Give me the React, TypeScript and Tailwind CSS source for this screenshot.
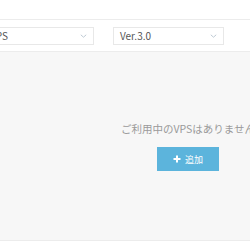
import React from "react";

function Chevron() {
  return (
    <svg width="7" height="4" viewBox="0 0 7 4" className="shrink-0">
      <path d="M0.8 0.8 L3.5 3.2 L6.2 0.8" fill="none" stroke="#bfcad4" strokeWidth="1" />
    </svg>
  );
}

function Select({ label }: { label: string }) {
  return (
    <div className="flex items-center justify-between w-[111px] h-[18px] border border-[#e8e8e8] bg-white pl-[6px] pr-[6px]">
      <span className="text-[10px] leading-none text-[#555]">{label}</span>
      <Chevron />
    </div>
  );
}

export default function App() {
  return (
    <div
      className="w-[250px] h-[250px] overflow-hidden bg-white"
      style={{ fontFamily: '"Noto Sans CJK JP", "Noto Sans", sans-serif' }}
    >
      <div className="ml-[-24px] w-[424px] flex flex-col">
        <div className="h-[20px] bg-white border-b border-[#ececec]" />
        <div className="h-[32px] bg-white border-b border-[#ececec] flex items-center pl-[7px] gap-[19px]">
          <Select label="VPS" />
          <Select label="Ver.3.0" />
        </div>
        <div className="h-[189px] bg-[#f7f7f7] border-b border-[#ececec] flex flex-col items-center pt-[70px]">
          <p className="text-[10.5px] leading-[14px] text-[#9a9a9a] whitespace-nowrap">
            ご利用中のVPSはありません
          </p>
          <button className="mt-[11px] w-[62px] h-[24px] bg-[#5cb4dc] flex items-center justify-center gap-[4px] text-white">
            <svg width="8" height="8" viewBox="0 0 8 8">
              <path d="M4 0.5 V7.5 M0.5 4 H7.5" stroke="white" strokeWidth="2" />
            </svg>
            <span className="text-[9px] leading-none">追加</span>
          </button>
        </div>
      </div>
    </div>
  );
}
